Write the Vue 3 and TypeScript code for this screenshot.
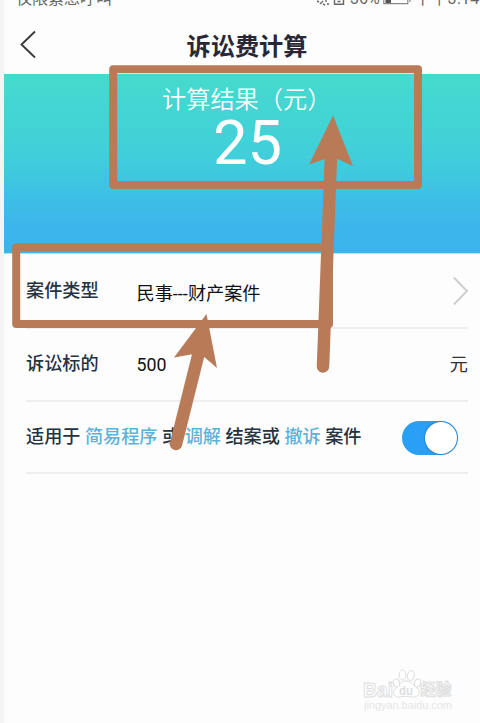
<script setup lang="ts">
import { ref } from 'vue'

const result = ref<number>(25)
const caseType = ref<string>('民事---财产案件')
const amount = ref<string>('500')
const reduced = ref<boolean>(true)
</script>

<template>
  <div class="page">
    <div class="status">
      <span class="carrier">仅限紧急呼叫</span>
      <div class="status-right">
        <svg class="status-icons" width="32" height="10" viewBox="0 0 32 10" fill="none" stroke="#666" stroke-width="1.4">
          <path d="M1 1l2 1M4 4l3-3M7 4l2 1M10 0v2M11 4h2" />
          <path d="M18.5 0v4.3h9V0M21.5 1.500h3" />
        </svg>
        <span class="percent">36%</span>
        <svg class="battery" width="30" height="10" viewBox="0 0 30 10" fill="none" stroke="#888">
          <path d="M1.8 0v3.6h24V0M28 0v2" stroke-width="1.2" />
          <path d="M3.500 0h5.500v3H3.500z" fill="#555" stroke="none" />
        </svg>
        <span class="time">下午3:14</span>
      </div>
    </div>

    <header class="header">
      <svg class="back" width="18" height="30" viewBox="0 0 18 30" fill="none" stroke="#3b3b3f" stroke-width="1.9">
        <path d="M16 2.5L2.5 15.5L16 28.5" />
      </svg>
      <h1>诉讼费计算</h1>
    </header>

    <section class="result">
      <div class="result-label">计算结果（元）</div>
      <div class="result-value">{{ result }}</div>
    </section>

    <main class="form">
      <div class="row first">
        <span class="label">案件类型</span>
        <span class="value type">{{ caseType }}</span>
        <svg class="chevron" width="16" height="30" viewBox="0 0 16 30" fill="none" stroke="#cdcdcf" stroke-width="1.9">
          <path d="M.8 1.5L14 15L.8 28.5" />
        </svg>
      </div>
      <div class="row">
        <span class="label">诉讼标的</span>
        <span class="value amount">{{ amount }}</span>
        <span class="unit">元</span>
      </div>
      <div class="row">
        <span class="label">适用于 <b>简易程序</b> 或 <b>调解</b> 结案或 <b>撤诉</b> 案件</span>
        <button class="switch" :class="{ on: reduced }" @click="reduced = !reduced"><i></i></button>
      </div>
    </main>

    <svg class="marks" width="480" height="723" viewBox="0 0 480 723">
      <g fill="none" stroke="#b97b57" stroke-width="8" stroke-linejoin="round">
        <path d="M113.2 69.2H418V185H113.2z" />
        <path d="M16.2 247.2H329V324H16.2z" />
      </g>
      <g fill="none" stroke="#b97b57" stroke-linecap="round">
        <path d="M331 155L323 366.500" stroke-width="12.500" />
        <path d="M200 348L176 444" stroke-width="12.500" />
      </g>
      <g fill="#b97b57">
        <path d="M333 115.500L353 166L337.500 159L325 159L309 164.500z" />
        <path d="M206.500 314L217 368L202.500 355.500L191 354.500L174 357.500z" />
      </g>
    </svg>

    <svg class="watermark" width="94" height="46" viewBox="0 0 94 46">
      <g fill="#fff" stroke="#dedede" stroke-width="1">
        <text x="0" y="27.500" font-size="21" textLength="30" lengthAdjust="spacingAndGlyphs">Bai</text>
        <path d="M43 12C37 12 36 17 33 19C28 23 31 29 37 28C41 27 45 27 49 28C55 29 59 23 54 19C51 17 49 12 43 12z" />
        <ellipse cx="33.500" cy="14" rx="3" ry="4" transform="rotate(-15 33.500 14)" />
        <ellipse cx="39.500" cy="6" rx="3.300" ry="5" />
        <ellipse cx="48" cy="6.500" rx="3.300" ry="5" transform="rotate(15 48 6)" />
        <ellipse cx="54.500" cy="14" rx="3" ry="4" transform="rotate(20 54.500 14)" />
        <text class="du" x="36" y="26" font-size="12" textLength="14" lengthAdjust="spacingAndGlyphs">du</text>
        <text class="cn" x="57.500" y="26" font-size="15.500">经验</text>
      </g>
      <text class="wm-url" x="1" y="40" font-size="11" textLength="88">jingyan.baidu.com</text>
    </svg>
  </div>
</template>

<style>
body {
  margin: 0;
  background: #f4f4f4;
}
</style>

<style scoped>
.page {
  position: relative;
  box-sizing: border-box;
  width: 480px;
  height: 723px;
  padding-left: 4px;
  overflow: hidden;
  background: linear-gradient(90deg, #f4f4f4 4px, #fdfdfd 4px);
  font-family: Roboto, "Noto Sans CJK SC", sans-serif;
  color: #25323f;
}

.status {
  display: flex;
  justify-content: space-between;
  height: 14px;
  padding-left: 12px;
  overflow: hidden;
  color: #666;
  font-size: 16px;
  line-height: 20px;
  white-space: nowrap;
}

.carrier,
.percent,
.time {
  margin-top: -11px;
}

.status-right {
  display: flex;
  width: 164px;
}

.status-icons,
.percent,
.battery,
.time {
  flex: none;
}

.status-icons {
  margin-right: 2px;
}

.percent {
  width: 32px;
}

.battery {
  margin-right: 3px;
}

.time {
  letter-spacing: 0.3px;
}

.header {
  display: flex;
  align-items: center;
  height: 60px;
}

.back {
  margin-left: 15px;
}

h1 {
  margin: 5px 0 0 149.500px;
  color: #292735;
  font-size: 24.200px;
  font-weight: 700;
  line-height: 34px;
}

.result {
  display: flex;
  flex-direction: column;
  box-sizing: border-box;
  height: 180px;
  padding-top: 9.500px;
  border-bottom: 1px solid #b8dff4;
  background: linear-gradient(#46dacd, #40cfda 45%, #3cb5ec 85%, #3ab4ea);
  color: #fff;
}

.result-label {
  margin-left: 158px;
  font-size: 24.200px;
  font-weight: 350;
  line-height: 33px;
}

.result-value {
  margin: -5px 0 0 209px;
  font-size: 61.500px;
  line-height: 62px;
}

.form {
  padding: 0 12px 0 22px;
}

.row {
  display: flex;
  align-items: center;
  box-sizing: border-box;
  height: 72.500px;
  border-bottom: 2px solid #eeeef0;
  font-size: 18.150px;
  line-height: 28px;
}

.row.first {
  height: 75px;
}

.label {
  flex: none;
  font-weight: 500;
  white-space: nowrap;
}

.label b {
  color: #5eb2d9;
  font-weight: 500;
}

.value {
  margin-left: 38px;
  color: #111;
}

.type {
  padding-top: 6px;
}

.amount {
  padding-top: 1px;
  font-size: 17.800px;
}

.chevron {
  margin: 1px -1px 0 auto;
}

.unit {
  margin: 1px 0 0 auto;
  color: #333;
}

.switch {
  display: flex;
  box-sizing: border-box;
  width: 56px;
  height: 34px;
  margin: 2px 10px 0 auto;
  padding: 1px;
  border: 0;
  border-radius: 17px;
  background: #ccc;
}

.switch.on {
  justify-content: flex-end;
  background: #299ff5;
}

.switch i {
  width: 32px;
  height: 32px;
  border-radius: 50%;
  background: #fff;
  box-shadow: 0 0 2px #1c5383;
}

.marks {
  position: absolute;
  top: 0;
  left: 0;
}

.watermark {
  position: absolute;
  top: 669px;
  left: 363px;
  font-family: "Liberation Sans", "Noto Sans CJK SC", sans-serif;
  font-weight: 700;
}

.du {
  fill: #dedede;
  stroke: none;
}

.cn {
  font-family: "Noto Sans CJK SC", sans-serif;
}

.wm-url {
  fill: #e6e6e6;
  font-weight: 400;
}
</style>
